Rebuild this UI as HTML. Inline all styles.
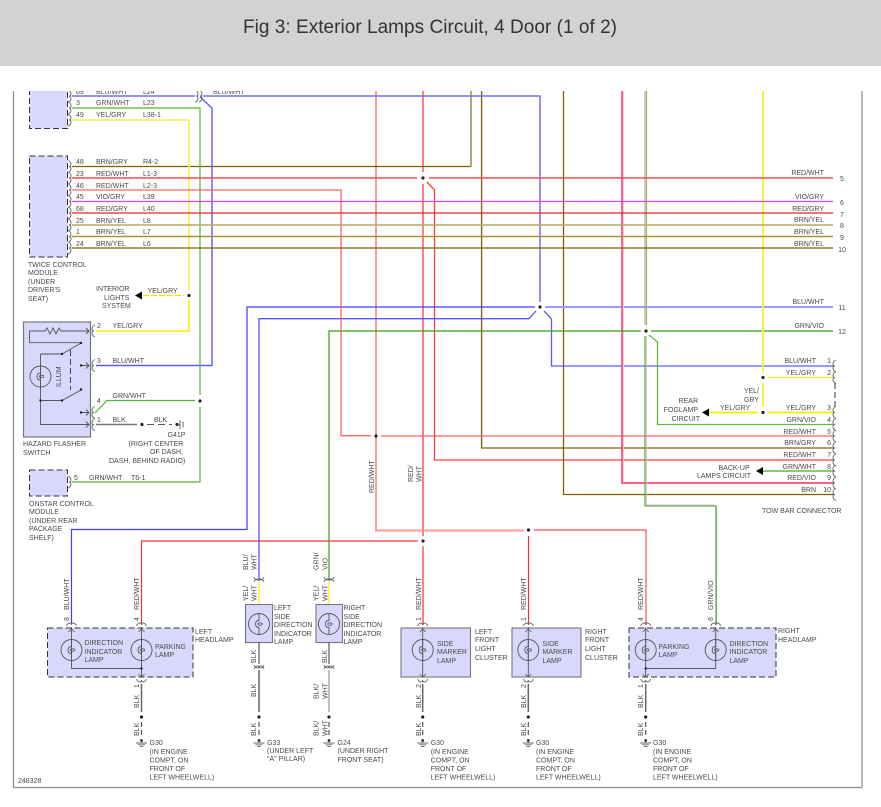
<!DOCTYPE html>
<html><head><meta charset="utf-8"><style>
html,body{margin:0;padding:0;background:#fff;width:881px;height:807px;overflow:hidden}
svg{display:block}
text{font-family:"Liberation Sans",sans-serif;font-size:7px;fill:#4a4a4a}
.w{fill:none;stroke-linejoin:miter}
.m{text-anchor:end}
.c{text-anchor:middle}
</style></head><body>
<svg width="881" height="807" viewBox="0 0 881 807" xmlns="http://www.w3.org/2000/svg">
<defs>
<clipPath id="cp"><rect x="0" y="91" width="881" height="716"/></clipPath>
<g id="cn"><path d="M0,-6 Q3,-5 3,-2 Q3,0 1,0 Q3,0 3,2 Q3,5 0,6" fill="none" stroke="#666" stroke-width=".9"/></g>
<g id="cl"><path d="M0,-6 Q-3,-5 -3,-2 Q-3,0 -1,0 Q-3,0 -3,2 Q-3,5 0,6" fill="none" stroke="#666" stroke-width=".9"/></g>
<g id="cv"><path d="M-5,2 Q-4,-1 -1,-1 Q0,-1 0,1 Q0,-1 1,-1 Q4,-1 5,2" fill="none" stroke="#666" stroke-width=".9"/></g>
<g id="cb"><path d="M-5,-2 Q-4,1 -1,1 Q0,1 0,-1 Q0,1 1,1 Q4,1 5,-2" fill="none" stroke="#666" stroke-width=".9"/></g>
<g id="lamp"><circle r="10.5" fill="none" stroke="#555" stroke-width=".9"/><path d="M0,-10.5 V-3.5 Q-3.5,-3.5 -3.5,0 Q-3.5,3.5 0,3.5 V10.5" fill="none" stroke="#555" stroke-width=".9"/><ellipse cx="1" cy="0" rx="2.2" ry="1.2" fill="none" stroke="#555" stroke-width=".8"/></g>
<g id="gnd"><circle cx="0" cy="-2.5" r="1.4" fill="#222"/><path d="M-5.5,0 H5.5 M-3.5,1.8 H3.5 M-1.8,3.6 H1.8 M0,-2 V0" stroke="#666" stroke-width=".9" fill="none"/></g>
<g id="dot"><circle r="1.6" fill="#222"/></g>
<g id="au"><path d="M-3,3 L0,0 L3,3" fill="none" stroke="#555" stroke-width=".8"/></g>
<g id="ad"><path d="M-3,-3 L0,0 L3,-3" fill="none" stroke="#555" stroke-width=".8"/></g>
</defs>

<rect x="0" y="0" width="881" height="66" fill="#d2d2d2"/>
<text x="243" y="33" textLength="374" lengthAdjust="spacing" style="font-size:19px;fill:#333">Fig 3: Exterior Lamps Circuit, 4 Door (1 of 2)</text>

<!-- frame -->
<path d="M13.5,91 V787.5 H862 M862,91 V787.5" fill="none" stroke="#8f8f8f" stroke-width="1.3"/>

<g clip-path="url(#cp)">
<!-- module boxes -->
<rect x="29.5" y="85" width="38" height="43.5" fill="#d8d8fc" stroke="#333" stroke-width="1" stroke-dasharray="6 3"/>
<rect x="29.5" y="156" width="38" height="101" fill="#d8d8fc" stroke="#333" stroke-width="1" stroke-dasharray="6 3"/>
<rect x="29.5" y="470" width="38" height="26" fill="#d8d8fc" stroke="#333" stroke-width="1" stroke-dasharray="6 3"/>
<rect x="23.5" y="322" width="67" height="115" fill="#d8d8fc" stroke="#777" stroke-width="1.2"/>

<!-- vertical long wires -->
<g class="w" stroke-width="1.2">
<path d="M376,91 V530.5 H524" stroke="#ff9a9a" stroke-width="2"/>
<path d="M534,530 H646 V625" stroke="#ff6a6a" stroke-width="1.4"/>
<path d="M528.5,536 V625" stroke="#ff2a2a"/>
<path d="M423,91 V172 M423,184 V536 M423,546 V625" stroke="#ff8080" stroke-width="2"/>
<path d="M418,541 H141.5 V625" stroke="#ff3030"/>
<path d="M427,182 L434.5,190 V460 H833" stroke="#ff3a3a" stroke-width="1.3"/>
<path d="M471,91 V167" stroke="#b5a878" stroke-width="2"/>
<path d="M72,166.5 H470" stroke="#7f6000"/>
<path d="M482.5,91 V449" stroke="#ddd" stroke-width="1.2"/>
<path d="M481.5,91 V448 H833" stroke="#806510" stroke-width="1.2"/>
<path d="M563.5,91 V494.5 H833" stroke="#7f6000" stroke-width="1.3"/>
<path d="M72,96 H195 M203,96 H540 V302" stroke="#6f6fff" stroke-width="1.5"/>
<path d="M200,97 L212,108 V365.5 H96" stroke="#5a5aff" stroke-width="1.4"/>
<path d="M535,307 H247 V529.5 H71.5 V625" stroke="#3c3cff" stroke-width="1.2"/>
<path d="M545,307 H833" stroke="#9a9aff" stroke-width="2"/>
<path d="M536,311 L529,318.7 H259 V578" stroke="#5555ff" stroke-width="1.3"/>
<path d="M544,311 L551.5,319 V366 H833" stroke="#5a5aff" stroke-width="1.3"/>
<path d="M622,91 V483 H833" stroke="#ff4a78" stroke-width="1.7"/>
<path d="M623.5,91 V481" stroke="#f8c8f0" stroke-width="1"/>
<path d="M645,91 V325" stroke="#a59a82" stroke-width="1"/>
<path d="M646.5,91 V325" stroke="#8cc070" stroke-width="1.2"/>
<path d="M645,336 V506 H716 V625" stroke="#40a820" stroke-width="1.1"/>
<path d="M646.5,336 V505 H715" stroke="#e0b8e0" stroke-width=".9"/>
<path d="M716.8,507 V625" stroke="#c8a8c8" stroke-width=".6"/>
<path d="M641,331 H329 V578" stroke="#34a010" stroke-width="1.2"/>
<path d="M651,331 H833" stroke="#34a010" stroke-width="1.2"/>
<path d="M649,335 L657.5,342 V424.5 H833" stroke="#60b840" stroke-width="1.3"/>
<path d="M763,91 V373 M763,383 V407" stroke="#f8f040" stroke-width="2"/>
<path d="M768,377.5 H833" stroke="#f0ee20" stroke-width="1.3"/>
<path d="M768,412.5 H833 M758,412.5 H709" stroke="#f4f000" stroke-width="1.7"/>

<path d="M72,108 H200 V395 M200,407 V482 H72" stroke="#50b830" stroke-width="1.2"/>
<path d="M72,120 H189 V290" stroke="#f4f050" stroke-width="1.6"/>
<path d="M189,300 V331 H96" stroke="#f4f000" stroke-width="1.6"/>
<path d="M143,295.5 H184" stroke="#e8e400" stroke-width="1.2" stroke-dasharray="6 2"/>
<path d="M95,413 L107,400.5 H195" stroke="#50b830" stroke-width="1.2"/>
<path d="M96,424.5 H137" stroke="#777" stroke-width="1.5"/>
<path d="M147,424.5 H172" stroke="#555" stroke-width="1" stroke-dasharray="7 4"/>

<path d="M72,178 H417 M429,178 H833" stroke="#ff4a4a" stroke-width="1.4"/>
<path d="M72,190 H341 V435.7 H371 M381,436 H833" stroke="#ff6060" stroke-width="1.3"/>
<path d="M72,201.5 H833" stroke="#e840e8" stroke-width="1.3"/>
<path d="M72,213 H833" stroke="#f02020" stroke-width="1.2"/>
<path d="M72,225 H833" stroke="#b8a860" stroke-width="1.6"/>
<path d="M72,236.5 H833" stroke="#a89430" stroke-width="1.5"/>
<path d="M72,248 H833" stroke="#806000" stroke-width="1.2"/>
<path d="M763,471 H833" stroke="#60b840" stroke-width="1.4"/>
</g>

<!-- junction dots -->
<use href="#dot" x="423" y="178"/><use href="#dot" x="540" y="307"/><use href="#dot" x="646" y="331"/>
<use href="#dot" x="376" y="436"/><use href="#dot" x="423" y="541"/><use href="#dot" x="528.5" y="530"/>
<use href="#dot" x="763" y="377.5"/><use href="#dot" x="763" y="412.5"/><use href="#dot" x="189" y="295.5"/>
<use href="#dot" x="200" y="401"/>
<use href="#dot" x="142" y="424.5"/><use href="#dot" x="177" y="424.5"/>

<!-- arrows -->
<path d="M135,295.5 L142,291.5 V299.5 Z M702,412.5 L709,408.5 V416.5 Z M756,471 L763,467 V475 Z" fill="#000"/>

<!-- G41P ground -->
<path d="M177,424.5 H180 M180,420 V429 M183,421.5 V427.5" stroke="#555" stroke-width=".9" fill="none"/>

<!-- connectors -->
<use href="#cn" x="68" y="96"/><use href="#cn" x="68" y="108"/><use href="#cn" x="68" y="120"/>
<use href="#cn" x="68" y="166.5"/><use href="#cn" x="68" y="178"/><use href="#cn" x="68" y="190"/><use href="#cn" x="68" y="201.5"/><use href="#cn" x="68" y="213"/><use href="#cn" x="68" y="225"/><use href="#cn" x="68" y="236.5"/><use href="#cn" x="68" y="248"/>
<use href="#cn" x="68" y="482"/>
<use href="#cn" x="195" y="96"/><use href="#cn" x="199" y="96"/>
<use href="#cl" x="95" y="331"/><use href="#cl" x="95" y="365.5"/><use href="#cl" x="95" y="412.5"/><use href="#cl" x="95" y="424.5"/>
<g id="tow">
<use href="#cl" x="836" y="366"/><use href="#cl" x="836" y="377.5"/><use href="#cl" x="836" y="412.5"/><use href="#cl" x="836" y="424.5"/><use href="#cl" x="836" y="436"/><use href="#cl" x="836" y="448"/><use href="#cl" x="836" y="460"/><use href="#cl" x="836" y="471"/><use href="#cl" x="836" y="483"/><use href="#cl" x="836" y="494.5"/>
</g>
<path d="M835,383 V407" stroke="#333" stroke-width="1" stroke-dasharray="6 3"/>

<!-- hazard internals -->
<g fill="none" stroke="#555" stroke-width=".9">
<path d="M29.5,342.7 V331 H45 l2,-3 l3,6 l3,-6 l3,6 l3,-6 l2,3 H89"/>
<path d="M29.5,342.7 H80"/>
<path d="M40.5,354 H62 L82,342.5"/>
<path d="M40.5,354 V424.5 H89"/>
<path d="M40.5,400.5 H62 L82,389.5"/>
<path d="M81,365.5 H89 M81,412.5 H89"/>
<path d="M70.5,350 V390" stroke-dasharray="6 3" stroke="#333"/>
<path d="M86,328 L89,331 L86,334 M86,362.5 L89,365.5 L86,368.5 M86,409.5 L89,412.5 L86,415.5 M86,421.5 L89,424.5 L86,427.5"/>
</g>
<use href="#lamp" x="40.5" y="376.5"/>
<circle cx="40.5" cy="400.5" r="1.2" fill="#222"/><circle cx="62" cy="400.5" r="1.2" fill="#222"/><circle cx="62" cy="354" r="1.2" fill="#222"/><circle cx="81" cy="343" r="1.2" fill="#222"/><circle cx="81" cy="389.5" r="1.2" fill="#222"/><circle cx="81" cy="365.5" r="1.2" fill="#222"/><circle cx="81" cy="412.5" r="1.2" fill="#222"/>

<!-- bottom lamp boxes -->
<rect x="47.5" y="628" width="145.5" height="49" fill="#d8d8fc" stroke="#333" stroke-width="1" stroke-dasharray="6 3"/>
<rect x="629" y="628" width="147" height="49" fill="#d8d8fc" stroke="#333" stroke-width="1" stroke-dasharray="6 3"/>
<rect x="401" y="628" width="69.5" height="49" fill="#d8d8fc" stroke="#777" stroke-width="1.1"/>
<rect x="512" y="628" width="69" height="49" fill="#d8d8fc" stroke="#777" stroke-width="1.1"/>
<rect x="245.5" y="604.5" width="27" height="38" fill="#d8d8fc" stroke="#777" stroke-width="1.1"/>
<rect x="316" y="604.5" width="26.5" height="38" fill="#d8d8fc" stroke="#777" stroke-width="1.1"/>

<!-- internal wires -->
<g fill="none" stroke="#555" stroke-width=".9">
<path d="M71.5,627 V668.5 H141.5 M141.5,627 V677"/>
<path d="M715.7,627 V668.5 H645.7 M645.7,627 V677"/>
<path d="M422.7,627 V677 M528.3,627 V677"/>
</g>
<use href="#lamp" x="71.5" y="650"/><use href="#lamp" x="141.5" y="650"/>
<use href="#lamp" x="645.7" y="650"/><use href="#lamp" x="715.7" y="650"/>
<use href="#lamp" x="422.7" y="650"/><use href="#lamp" x="528.3" y="650"/>
<use href="#lamp" x="259" y="624"/><use href="#lamp" x="329" y="624"/>
<circle cx="141.5" cy="668.5" r="1.2" fill="#222"/><circle cx="645.7" cy="668.5" r="1.2" fill="#222"/>
<use href="#au" x="71.5" y="629"/><use href="#au" x="141.5" y="629"/><use href="#au" x="422.7" y="629"/><use href="#au" x="528.3" y="629"/><use href="#au" x="645.7" y="629"/><use href="#au" x="715.7" y="629"/>
<use href="#ad" x="141.5" y="677"/><use href="#ad" x="422.7" y="677"/><use href="#ad" x="528.3" y="677"/><use href="#ad" x="645.7" y="677"/>

<!-- lamp connectors -->
<use href="#cv" x="71.5" y="624"/><use href="#cv" x="141.5" y="624"/><use href="#cv" x="422.7" y="624"/><use href="#cv" x="528.3" y="624"/><use href="#cv" x="645.7" y="624"/><use href="#cv" x="715.7" y="624"/>
<use href="#cb" x="141.5" y="681"/><use href="#cb" x="422.7" y="681"/><use href="#cb" x="528.3" y="681"/><use href="#cb" x="645.7" y="681"/>
<use href="#cv" x="259" y="580"/><use href="#cb" x="259" y="579"/><use href="#cv" x="329" y="580"/><use href="#cb" x="329" y="579"/>
<use href="#cv" x="259" y="667"/><use href="#cb" x="259" y="667"/><use href="#cv" x="329" y="667"/><use href="#cb" x="329" y="667"/>

<!-- side lamp wires -->
<path d="M259,582 V604 M329,582 V604" stroke="#f4f040" stroke-width="1.6"/>
<path d="M259,642 V664 M329,642 V664" stroke="#666" stroke-width="1.3"/>
<path d="M259,670 V712" stroke="#666" stroke-width="1.5"/>
<path d="M329,670 V712" stroke="#999" stroke-width="1.3"/>
<path d="M259,722 V736 M329,722 V736" stroke="#555" stroke-width="1.2" stroke-dasharray="5 3"/>

<!-- grounds wires -->
<path d="M141.5,684 V712 M422.7,684 V712 M528.3,684 V712 M645.7,684 V712" stroke="#666" stroke-width="1.5"/>
<path d="M141.5,722 V736 M422.7,722 V736 M528.3,722 V736 M645.7,722 V736" stroke="#555" stroke-width="1.2" stroke-dasharray="5 3"/>
<use href="#dot" x="141.5" y="717"/><use href="#dot" x="259" y="717"/><use href="#dot" x="329" y="717"/><use href="#dot" x="422.7" y="717"/><use href="#dot" x="528.3" y="717"/><use href="#dot" x="645.7" y="717"/>
<use href="#gnd" x="141.5" y="743"/><use href="#gnd" x="259" y="743"/><use href="#gnd" x="329" y="743"/><use href="#gnd" x="422.7" y="743"/><use href="#gnd" x="528.3" y="743"/><use href="#gnd" x="645.7" y="743"/>

<!-- left module labels -->
<text x="76" y="94">69</text><text x="96" y="94">BLU/WHT</text><text x="143" y="94">L24</text><text x="213" y="94">BLU/WHT</text>
<text x="76" y="105">3</text><text x="96" y="105">GRN/WHT</text><text x="143" y="105">L23</text>
<text x="76" y="117">49</text><text x="96" y="117">YEL/GRY</text><text x="143" y="117">L38-1</text>
<text x="76" y="164">48</text><text x="96" y="164">BRN/GRY</text><text x="143" y="164">R4-2</text>
<text x="76" y="176">23</text><text x="96" y="176">RED/WHT</text><text x="143" y="176">L1-3</text>
<text x="76" y="188">46</text><text x="96" y="188">RED/WHT</text><text x="143" y="188">L2-3</text>
<text x="76" y="199">45</text><text x="96" y="199">VIO/GRY</text><text x="143" y="199">L39</text>
<text x="76" y="211">68</text><text x="96" y="211">RED/GRY</text><text x="143" y="211">L40</text>
<text x="76" y="223">25</text><text x="96" y="223">BRN/YEL</text><text x="143" y="223">L8</text>
<text x="76" y="234">1</text><text x="96" y="234">BRN/YEL</text><text x="143" y="234">L7</text>
<text x="76" y="246">24</text><text x="96" y="246">BRN/YEL</text><text x="143" y="246">L6</text>
<text x="28" y="267">TWICE CONTROL</text><text x="28" y="275">MODULE</text><text x="28" y="284">(UNDER</text><text x="28" y="292">DRIVER'S</text><text x="28" y="301">SEAT)</text>
<text x="96" y="291">INTERIOR</text><text x="104" y="300">LIGHTS</text><text x="102" y="308">SYSTEM</text>
<text x="147.5" y="293">YEL/GRY</text>
<text x="97" y="328">2</text><text x="112.5" y="328">YEL/GRY</text>
<text x="97" y="363">3</text><text x="112.5" y="363">BLU/WHT</text>
<text x="97" y="403">4</text><text x="112.5" y="398">GRN/WHT</text>
<text x="97" y="422">1</text><text x="112.5" y="422">BLK</text><text x="154" y="422">BLK</text>
<text x="167.5" y="437">G41P</text><text x="128.5" y="446">(RIGHT CENTER</text><text x="150" y="454">OF DASH,</text><text x="109" y="463">DASH, BEHIND RADIO)</text>
<text x="23" y="446">HAZARD FLASHER</text><text x="23" y="455">SWITCH</text>
<text x="74" y="480">5</text><text x="89" y="480">GRN/WHT</text><text x="131" y="480">T6-1</text>
<text x="29" y="506">ONSTAR CONTROL</text><text x="29" y="514">MODULE</text><text x="29" y="523">(UNDER REAR</text><text x="29" y="531">PACKAGE</text><text x="29" y="540">SHELF)</text>
<text transform="translate(61 387) rotate(-90)">ILLUM</text>

<!-- right labels -->
<g class="m">
<text x="824" y="175" class="m">RED/WHT</text><text x="824" y="199" class="m">VIO/GRY</text><text x="824" y="211" class="m">RED/GRY</text><text x="824" y="222" class="m">BRN/YEL</text><text x="824" y="234" class="m">BRN/YEL</text><text x="824" y="246" class="m">BRN/YEL</text><text x="824" y="304" class="m">BLU/WHT</text><text x="824" y="328" class="m">GRN/VIO</text>
<text x="816" y="363" class="m">BLU/WHT</text><text x="816" y="375" class="m">YEL/GRY</text><text x="816" y="410" class="m">YEL/GRY</text><text x="816" y="422" class="m">GRN/VIO</text><text x="816" y="434" class="m">RED/WHT</text><text x="816" y="445" class="m">BRN/GRY</text><text x="816" y="457" class="m">RED/WHT</text><text x="816" y="469" class="m">GRN/WHT</text><text x="816" y="480" class="m">RED/VIO</text><text x="816" y="492" class="m">BRN</text>
<text x="831" y="363" class="m">1</text><text x="831" y="375" class="m">2</text><text x="831" y="410" class="m">3</text><text x="831" y="422" class="m">4</text><text x="831" y="434" class="m">5</text><text x="831" y="445" class="m">6</text><text x="831" y="457" class="m">7</text><text x="831" y="469" class="m">8</text><text x="831" y="480" class="m">9</text><text x="831" y="492" class="m">10</text>
<text x="759" y="393" class="m">YEL/</text><text x="759" y="402" class="m">GRY</text>
<text x="698" y="403" class="m">REAR</text><text x="698" y="412" class="m">FOGLAMP</text><text x="700" y="421" class="m">CIRCUIT</text>
</g>
<text x="842" y="181" class="c">5</text><text x="842" y="205" class="c">6</text><text x="842" y="217" class="c">7</text><text x="842" y="228" class="c">8</text><text x="842" y="240" class="c">9</text><text x="842" y="252" class="c">10</text><text x="842" y="310" class="c">11</text><text x="842" y="334" class="c">12</text>
<text x="720" y="410">YEL/GRY</text>
<text x="718.5" y="470">BACK-UP</text><text x="697" y="478">LAMPS CIRCUIT</text>
<text x="762" y="513">TOW BAR CONNECTOR</text>

<!-- rotated middle -->
<text transform="translate(374 493) rotate(-90)">RED/WHT</text>
<text transform="translate(413 482) rotate(-90)">RED/</text>
<text transform="translate(421.5 482) rotate(-90)">WHT</text>

<!-- rotated lamp labels -->
<text transform="translate(69 610) rotate(-90)">BLU/WHT</text><text transform="translate(69 621) rotate(-90)">8</text>
<text transform="translate(139 610) rotate(-90)">RED/WHT</text><text transform="translate(139 621) rotate(-90)">4</text>
<text transform="translate(248 570) rotate(-90)">BLU/</text><text transform="translate(256.5 570) rotate(-90)">WHT</text>
<text transform="translate(248 601) rotate(-90)">YEL/</text><text transform="translate(256.5 601) rotate(-90)">WHT</text>
<text transform="translate(318.5 570) rotate(-90)">GRN/</text><text transform="translate(327.5 570) rotate(-90)">VIO</text>
<text transform="translate(318.5 601) rotate(-90)">YEL/</text><text transform="translate(327.5 601) rotate(-90)">WHT</text>
<text transform="translate(256 663) rotate(-90)">BLK</text><text transform="translate(256 697) rotate(-90)">BLK</text><text transform="translate(256 736) rotate(-90)">BLK</text>
<text transform="translate(327 663) rotate(-90)">BLK</text><text transform="translate(318.5 699) rotate(-90)">BLK/</text><text transform="translate(327.5 699) rotate(-90)">WHT</text>
<text transform="translate(318.5 736) rotate(-90)">BLK/</text><text transform="translate(327.5 736) rotate(-90)">WHT</text>
<text transform="translate(139 688) rotate(-90)">1</text><text transform="translate(139 708) rotate(-90)">BLK</text><text transform="translate(139 736) rotate(-90)">BLK</text>
<text transform="translate(421 610) rotate(-90)">RED/WHT</text><text transform="translate(421 621) rotate(-90)">1</text><text transform="translate(421 688) rotate(-90)">2</text><text transform="translate(421 708) rotate(-90)">BLK</text><text transform="translate(421 736) rotate(-90)">BLK</text>
<text transform="translate(526 610) rotate(-90)">RED/WHT</text><text transform="translate(526 621) rotate(-90)">1</text><text transform="translate(526 688) rotate(-90)">2</text><text transform="translate(526 708) rotate(-90)">BLK</text><text transform="translate(526 736) rotate(-90)">BLK</text>
<text transform="translate(643 610) rotate(-90)">RED/WHT</text><text transform="translate(643 621) rotate(-90)">4</text><text transform="translate(643 688) rotate(-90)">1</text><text transform="translate(643 708) rotate(-90)">BLK</text><text transform="translate(643 736) rotate(-90)">BLK</text>
<text transform="translate(713 610) rotate(-90)">GRN/VIO</text><text transform="translate(713 621) rotate(-90)">8</text>

<!-- lamp text -->
<text x="84.5" y="645">DIRECTION</text><text x="84.5" y="654">INDICATOR</text><text x="84.5" y="662">LAMP</text>
<text x="155" y="649">PARKING</text><text x="155" y="657">LAMP</text>
<text x="195" y="634">LEFT</text><text x="195" y="642">HEADLAMP</text>
<text x="274" y="610">LEFT</text><text x="274" y="619">SIDE</text><text x="274" y="627">DIRECTION</text><text x="274" y="636">INDICATOR</text><text x="274" y="644">LAMP</text>
<text x="343.5" y="610">RIGHT</text><text x="343.5" y="619">SIDE</text><text x="343.5" y="627">DIRECTION</text><text x="343.5" y="636">INDICATOR</text><text x="343.5" y="644">LAMP</text>
<text x="437" y="646">SIDE</text><text x="437" y="654">MARKER</text><text x="437" y="663">LAMP</text>
<text x="475" y="634">LEFT</text><text x="475" y="642">FRONT</text><text x="475" y="651">LIGHT</text><text x="475" y="660">CLUSTER</text>
<text x="542.5" y="646">SIDE</text><text x="542.5" y="654">MARKER</text><text x="542.5" y="663">LAMP</text>
<text x="585" y="634">RIGHT</text><text x="585" y="642">FRONT</text><text x="585" y="651">LIGHT</text><text x="585" y="660">CLUSTER</text>
<text x="658.5" y="649">PARKING</text><text x="658.5" y="657">LAMP</text>
<text x="729.5" y="646">DIRECTION</text><text x="729.5" y="654">INDICATOR</text><text x="729.5" y="663">LAMP</text>
<text x="778" y="633">RIGHT</text><text x="778" y="642">HEADLAMP</text>

<!-- ground text -->
<text x="149.5" y="745">G30</text><text x="149.5" y="754">(IN ENGINE</text><text x="149.5" y="762.5">COMPT, ON</text><text x="149.5" y="771">FRONT OF</text><text x="149.5" y="779.5">LEFT WHEELWELL)</text>
<text x="267" y="745">G33</text><text x="267" y="753">(UNDER LEFT</text><text x="267" y="761">"A" PILLAR)</text>
<text x="337.5" y="745">G24</text><text x="337.5" y="753">(UNDER RIGHT</text><text x="337.5" y="762">FRONT SEAT)</text>
<text x="430.7" y="745">G30</text><text x="430.7" y="754">(IN ENGINE</text><text x="430.7" y="762.5">COMPT, ON</text><text x="430.7" y="771">FRONT OF</text><text x="430.7" y="779.5">LEFT WHEELWELL)</text>
<text x="536" y="745">G30</text><text x="536" y="754">(IN ENGINE</text><text x="536" y="762.5">COMPT, ON</text><text x="536" y="771">FRONT OF</text><text x="536" y="779.5">LEFT WHEELWELL)</text>
<text x="653" y="745">G30</text><text x="653" y="754">(IN ENGINE</text><text x="653" y="762.5">COMPT, ON</text><text x="653" y="771">FRONT OF</text><text x="653" y="779.5">LEFT WHEELWELL)</text>
<text x="18" y="783">248328</text>
</g>
</svg>
</body></html>
